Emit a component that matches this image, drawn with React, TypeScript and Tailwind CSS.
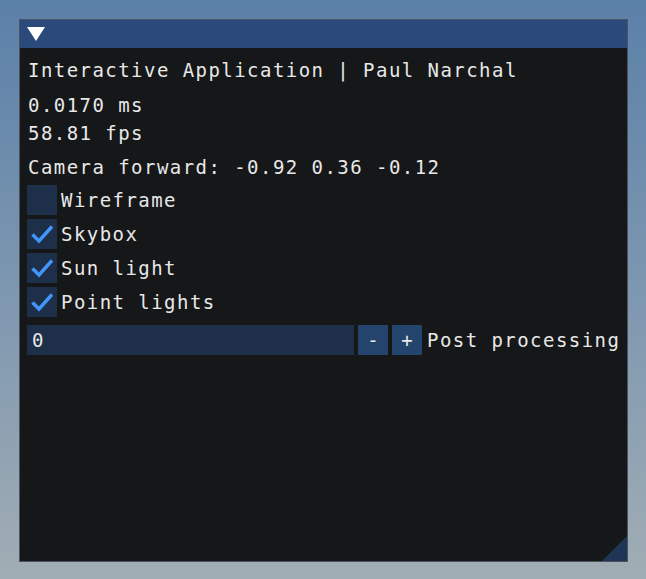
const font = { fontFamily: '"DejaVu Sans Mono", monospace' };

const Check = () => (
  <svg width="30" height="30" viewBox="0 0 30 30">
    <polyline
      points="5.5,15.5 12,22 25,7.5"
      fill="none"
      stroke="#4296fa"
      strokeWidth="3.4"
      strokeLinecap="butt"
      strokeLinejoin="miter"
    />
  </svg>
);

const CheckRow = ({ label, checked }: { label: string; checked: boolean }) => (
  <div className="flex items-center h-[30px] gap-[4px]">
    <div className="w-[30px] h-[30px] bg-[#1d2f49] shrink-0">{checked && <Check />}</div>
    <span className="leading-[24px]">{label}</span>
  </div>
);

const App = () => {
  return (
    <div className="w-[646px] h-[579px] bg-gradient-to-b from-[#5b80a8] via-[#7d97b0] to-[#a1adb4] pl-[19px] pt-[19px] overflow-hidden">
      <div
        className="relative w-[609px] h-[543px] border border-[#4c5160] bg-[#161719] flex flex-col text-[19px] tracking-[1.45px] text-[#e8e8e8]"
        style={font}
      >
        <div className="h-[28px] bg-[#294a7a] flex items-center pl-[7px] shrink-0">
          <svg width="18" height="14" viewBox="0 0 18 14">
            <polygon points="0,0 18,0 9,14" fill="#ffffff" />
          </svg>
        </div>
        <div className="flex flex-col px-[7px] pt-[8px]">
          <div className="leading-[24px] pl-[1px] mt-[2px]">Interactive Application | Paul Narchal</div>
          <div className="leading-[24px] mt-[11px] pl-[1px]">0.0170 ms</div>
          <div className="leading-[24px] mt-[4px] pl-[1px]">58.81 fps</div>
          <div className="leading-[24px] mt-[10px] pl-[1px]">Camera forward: -0.92 0.36 -0.12</div>
          <div className="flex flex-col gap-[4px] mt-[6px]">
            <CheckRow label="Wireframe" checked={false} />
            <CheckRow label="Skybox" checked />
            <CheckRow label="Sun light" checked />
            <CheckRow label="Point lights" checked />
          </div>
          <div className="flex items-center h-[30px] mt-[8px] whitespace-nowrap">
            <div className="w-[327px] h-[30px] bg-[#1d2f49] flex items-center pl-[5px] leading-[24px] shrink-0">0</div>
            <div className="w-[30px] h-[30px] bg-[#23456d] ml-[4px] flex items-center justify-center leading-[24px] tracking-normal shrink-0">-</div>
            <div className="w-[30px] h-[30px] bg-[#23456d] ml-[4px] flex items-center justify-center leading-[24px] tracking-normal shrink-0">+</div>
            <span className="ml-[5px] leading-[24px] shrink-0">Post processing</span>
          </div>
        </div>
        <div className="absolute right-0 bottom-0 w-[25px] h-[25px]">
          <svg width="25" height="25" viewBox="0 0 25 25">
            <polygon points="25,0 25,25 0,25" fill="#1f3555" />
          </svg>
        </div>
      </div>
    </div>
  );
};

export default App;
